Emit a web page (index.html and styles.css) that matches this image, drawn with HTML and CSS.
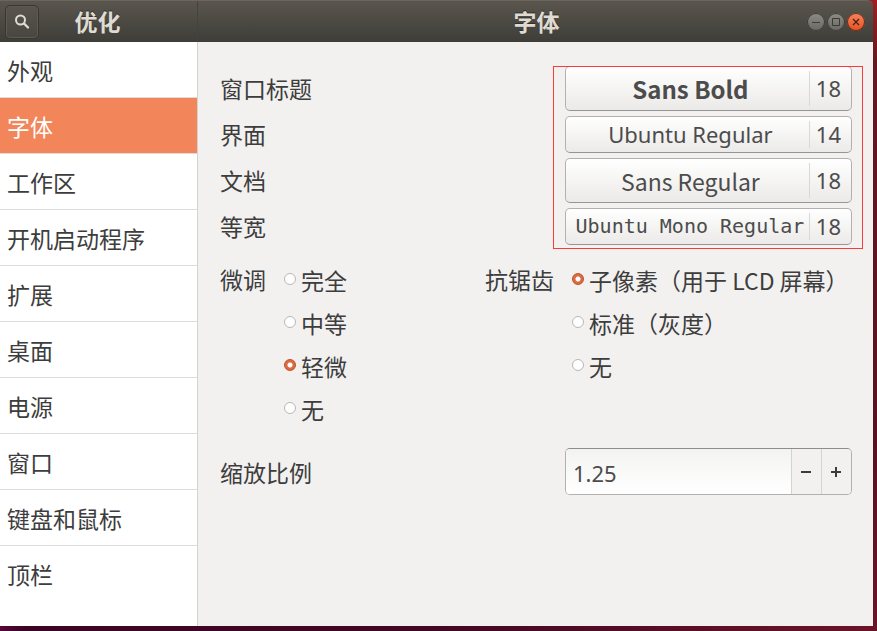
FILE: index.html
```html
<!DOCTYPE html>
<html lang="zh-CN">
<head>
<meta charset="utf-8">
<title>优化</title>
<link rel="stylesheet" href="styles.css">
</head>
<body>
<div class="window">
  <header class="titlebar">
    <div class="titlebar-side">
      <button class="search" type="button" aria-label="搜索">
        <svg width="16" height="16" viewBox="0 0 16 16" fill="none" stroke="#dfdbd2"><circle cx="6.5" cy="6" r="4.5" stroke-width="2"/><path d="M10 9.500l4 4" stroke-width="2.4" stroke-linecap="round"/></svg>
      </button>
      <h1 class="app-title">优化</h1>
    </div>
    <div class="titlebar-main">
      <h2 class="page-title">字体</h2>
      <div class="window-controls">
        <button class="control" type="button" aria-label="最小化"><svg width="18" height="18" viewBox="0 0 18 18"><path d="M5 9.500h8" stroke="#3c3b37"/></svg></button>
        <button class="control" type="button" aria-label="最大化"><svg width="18" height="18" viewBox="0 0 18 18"><path d="M5.500 5.500h7v7h-7z" fill="none" stroke="#3c3b37"/></svg></button>
        <button class="control control-close" type="button" aria-label="关闭"><svg width="18" height="18" viewBox="0 0 18 18"><path d="M6 6l6 6M12 6l-6 6" stroke="#4a2415" stroke-width="1.400"/></svg></button>
      </div>
    </div>
  </header>
  <div class="body">
    <nav class="sidebar">
      <a href="#">外观</a>
      <a href="#" class="active" aria-current="page">字体</a>
      <a href="#">工作区</a>
      <a href="#">开机启动程序</a>
      <a href="#">扩展</a>
      <a href="#">桌面</a>
      <a href="#">电源</a>
      <a href="#">窗口</a>
      <a href="#">键盘和鼠标</a>
      <a href="#">顶栏</a>
    </nav>
    <main class="content">
      <section class="fonts">
        <div class="row"><label for="f-title">窗口标题</label><button id="f-title" class="font-button tall" type="button"><span class="font-name bold">Sans Bold</span><span class="font-size">18</span></button></div>
        <div class="row"><label for="f-ui">界面</label><button id="f-ui" class="font-button" type="button"><span class="font-name ubuntu">Ubuntu Regular</span><span class="font-size">14</span></button></div>
        <div class="row"><label for="f-doc">文档</label><button id="f-doc" class="font-button tall" type="button"><span class="font-name">Sans Regular</span><span class="font-size">18</span></button></div>
        <div class="row"><label for="f-mono">等宽</label><button id="f-mono" class="font-button" type="button"><span class="font-name mono">Ubuntu Mono Regular</span><span class="font-size">18</span></button></div>
        <div class="highlight"></div>
      </section>
      <section class="rendering">
        <div class="group" role="radiogroup" aria-labelledby="hinting">
          <span class="group-name" id="hinting">微调</span>
          <div class="options">
            <label><input type="radio" name="hinting">完全</label>
            <label><input type="radio" name="hinting">中等</label>
            <label><input type="radio" name="hinting" checked>轻微</label>
            <label><input type="radio" name="hinting">无</label>
          </div>
        </div>
        <div class="group" role="radiogroup" aria-labelledby="aa">
          <span class="group-name" id="aa">抗锯齿</span>
          <div class="options">
            <label><input type="radio" name="aa" checked>子像素（用于 LCD 屏幕）</label>
            <label><input type="radio" name="aa">标准（灰度）</label>
            <label><input type="radio" name="aa">无</label>
          </div>
        </div>
      </section>
      <section class="row scale">
        <label for="scale">缩放比例</label>
        <div class="spin">
          <input id="scale" type="text" value="1.25">
          <button type="button" aria-label="减小"><svg width="12" height="12" viewBox="0 0 12 12"><path d="M1 6h10" stroke="#3c3b37" stroke-width="2"/></svg></button>
          <button type="button" aria-label="增大"><svg width="12" height="12" viewBox="0 0 12 12"><path d="M1 6h10M6 1v10" stroke="#3c3b37" stroke-width="2"/></svg></button>
        </div>
      </section>
    </main>
  </div>
</div>
</body>
</html>
```
FILE: styles.css
```css
* {
  box-sizing: border-box;
}

body {
  margin: 0;
  min-height: 100vh;
  display: flex;
  padding: 0 4px 5px 0;
  background:
    linear-gradient(90deg, #570638, #3c0424 24px, #420724 50%, #6b1428) bottom / 100% 5px no-repeat,
    linear-gradient(#9c2222, #651820 60px, #56131f 70%, #6b1428);
  color: #3d3d3d;
  font-family: "Noto Sans CJK SC", sans-serif;
  font-size: 23px;
  line-height: 34px;
}

button,
input {
  margin: 0;
  padding: 0;
  color: inherit;
  font: inherit;
}

h1,
h2 {
  margin: 0;
  padding-bottom: 2px;
  font-size: 23px;
  font-weight: 700;
  text-align: center;
}

.window {
  flex: 1;
  display: flex;
  flex-direction: column;
}

.titlebar {
  display: flex;
  height: 42px;
  border-top: 1px solid #69665d;
  border-radius: 0 6px 0 0;
  background: linear-gradient(#5a564e, #3e3d38);
  color: #dfdbd2;
  text-shadow: 0 -1px #302f2b;
}

.titlebar-side {
  flex: 0 0 198px;
  display: flex;
  align-items: center;
  padding: 0 41px 0 5px;
  border-right: 1px solid #45433d;
}

.search {
  display: flex;
  align-items: center;
  justify-content: center;
  width: 34px;
  height: 34px;
  border: 1px solid #373631;
  border-radius: 5px;
  background: linear-gradient(#58554d, #484640);
  box-shadow: inset 0 0 0 1px #5d5a52;
}

.app-title,
.page-title {
  flex: 1;
}

.titlebar-main {
  flex: 1;
  display: flex;
  align-items: center;
  padding: 0 8px 0 68px;
}

.window-controls {
  display: flex;
  gap: 2px;
}

.control {
  display: flex;
  width: 18px;
  height: 18px;
  border: 0;
  border-radius: 50%;
  background: linear-gradient(#8d8b84, #6a6862);
  box-shadow: inset 0 0 0 1px #3b3934;
}

.control-close {
  background: linear-gradient(#f8845f, #e8501d);
  box-shadow: inset 0 0 0 1px #5b3023;
}

.body {
  flex: 1;
  display: flex;
}

.sidebar {
  flex: 0 0 198px;
  border-right: 1px solid #d5d3d1;
  background: #fff;
}

.sidebar a {
  display: block;
  height: 56px;
  padding: 11px 7px 10px;
  border-bottom: 1px solid #dedddb;
  color: inherit;
  text-decoration: none;
}

.sidebar a:last-child {
  border-bottom: 0;
}

.sidebar .active {
  background: #f28559;
  color: #fff;
}

.content {
  flex: 1;
  padding: 23px 21px 0 22px;
  background: #f2f1f0;
}

.row {
  display: flex;
  align-items: center;
  justify-content: space-between;
}

.fonts {
  position: relative;
}

.fonts .row {
  height: 46px;
}

.font-button,
.spin {
  width: 287px;
  border: 1px solid #b3b1af;
  border-radius: 5px;
}

.font-button {
  display: flex;
  align-items: center;
  height: 37px;
  border-bottom-color: #979593;
  background: linear-gradient(#fff, #ebeae8);
  color: #4c4c4c;
  line-height: 34px;
}

.font-button.tall {
  height: 45px;
}

.font-name {
  flex: 1;
  padding: 2px 0 0 6px;
  font-size: 23px;
  white-space: nowrap;
}

.font-name.bold {
  font-size: 24px;
  font-weight: 700;
}

.font-name.ubuntu {
  padding-top: 0;
  font-family: "Noto Sans", sans-serif;
  font-size: 22px;
}

.font-name.mono {
  padding: 0 0 0 5px;
  font-family: "DejaVu Sans Mono", monospace;
  font-size: 20px;
}

.font-size {
  display: flex;
  align-items: center;
  align-self: stretch;
  margin: 4px 0;
  padding: 0 10px 0 6px;
  border-left: 1px solid #d9d8d6;
  font-family: "Noto Sans", sans-serif;
  font-size: 22px;
}

.highlight {
  position: absolute;
  inset: 1px -11px 0 auto;
  width: 310px;
  border: 1px solid #f93a3a;
  pointer-events: none;
}

.rendering {
  display: flex;
  gap: 138px;
  padding-top: 14px;
}

.group {
  display: flex;
  gap: 18px;
}

.group-name {
  margin-top: -1px;
}

.options {
  display: flex;
  flex-direction: column;
  gap: 9px;
}

.options label {
  display: flex;
  align-items: center;
  gap: 5px;
  white-space: nowrap;
}

.options input {
  appearance: none;
  width: 12px;
  height: 12px;
  margin-bottom: 3px;
  border: 1px solid #b9b7b5;
  border-radius: 50%;
  background: #fff;
}

.options input:checked {
  border-color: #bd5029;
  background: radial-gradient(circle, #fff 2px, #db6c41 3px);
}

.scale {
  padding-top: 22px;
}

.spin {
  display: flex;
  height: 47px;
  overflow: hidden;
  border-top-color: #8f8d8b;
}

.spin input {
  flex: 1;
  min-width: 0;
  padding: 2px 7px 0;
  border: 0;
  background: linear-gradient(#f3f3f2, #fff);
  color: #4c4c4c;
  font-family: "Noto Sans", sans-serif;
  font-size: 22px;
}

.spin button {
  display: flex;
  align-items: center;
  justify-content: center;
  width: 30px;
  padding-right: 2px;
  border: 0;
  border-left: 1px solid #d5d3d1;
  background: #f2f1f0;
}
```
